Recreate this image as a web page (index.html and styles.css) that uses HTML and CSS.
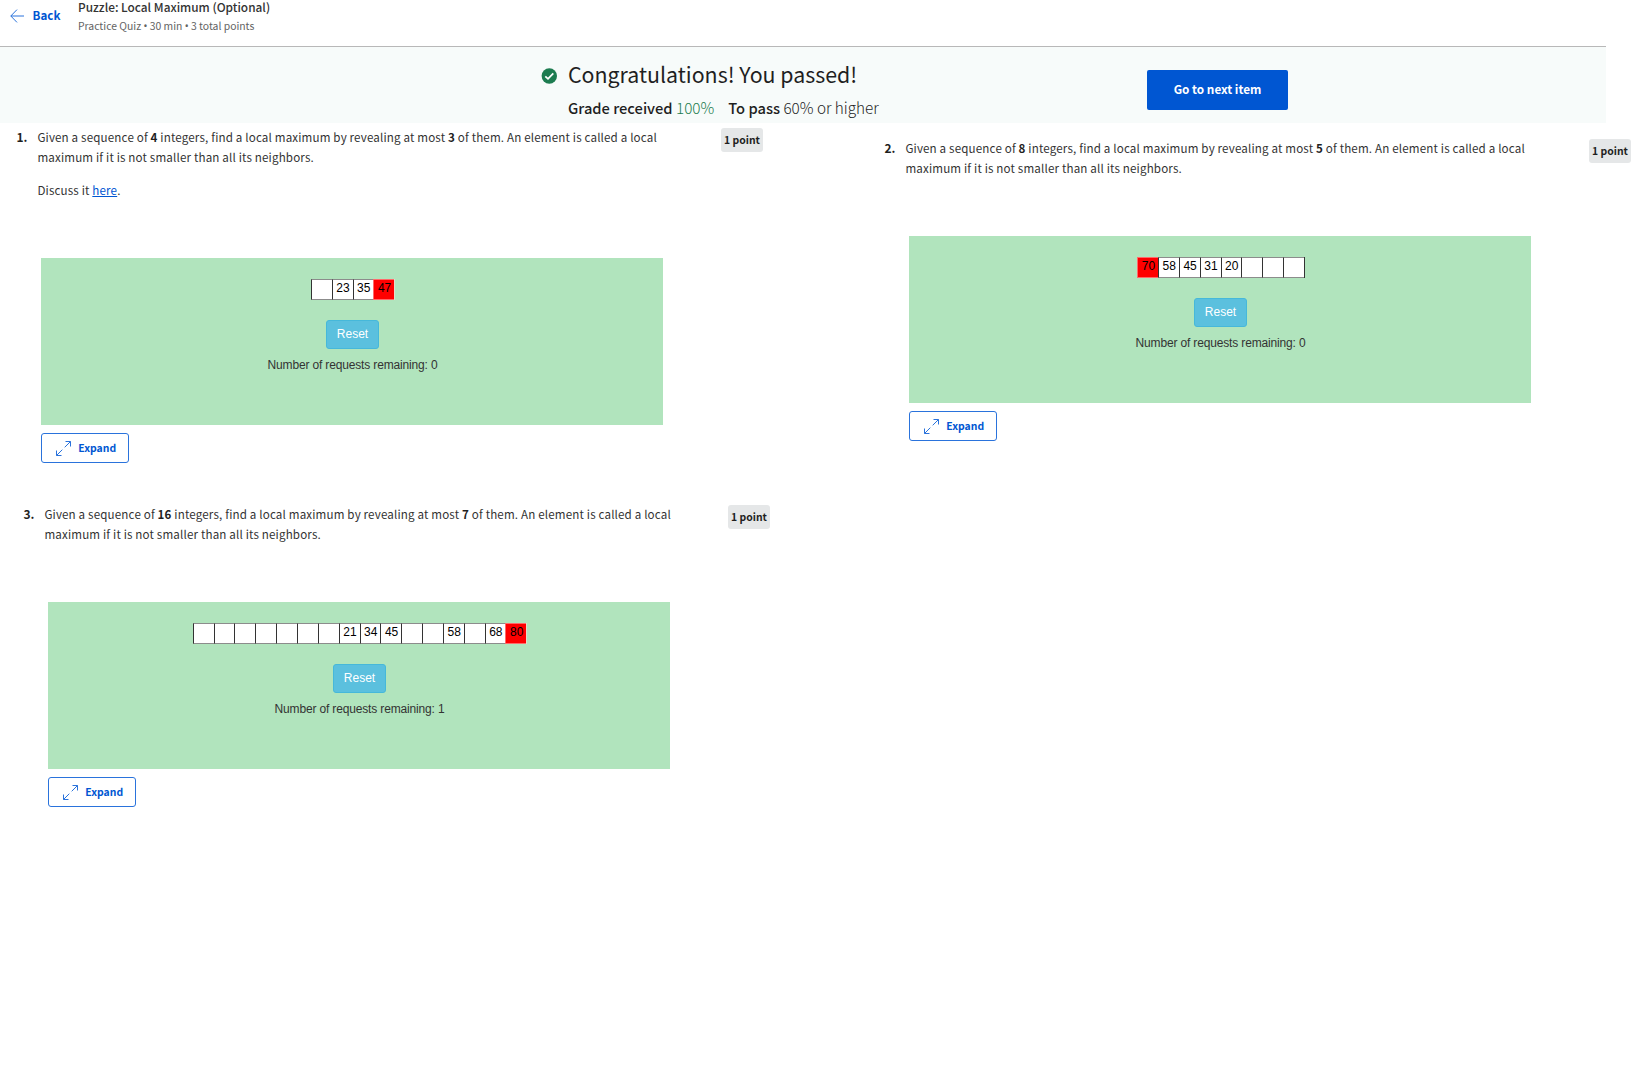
FILE: index.html
```html
<!DOCTYPE html>
<html lang="en">
<head>
<meta charset="utf-8">
<title>Puzzle: Local Maximum</title>
<link rel="stylesheet" href="styles.css">
</head>
<body>
<header class="topbar">
  <a class="back"><svg class="back-arrow" width="14" height="14" viewBox="0 0 14 14"><path d="M7 .6 .8 7 7 13.4M.8 7H14"/></svg><span>Back</span></a>
  <div class="heading">
    <h1 class="title">Puzzle: Local Maximum (Optional)</h1>
    <p class="subtitle">Practice Quiz <span class="dot">•</span> 30 min <span class="dot">•</span> 3 total points</p>
  </div>
</header>
<section class="result">
  <svg class="check" width="16" height="16" viewBox="0 0 16 16"><circle cx="8.3" cy="8" r="7.7"/><path d="M4.3 8.3 7 10.8 12.3 5.4"/></svg>
  <div class="result-text">
    <h2 class="congrats">Congratulations! You passed!</h2>
    <p class="grade"><b>Grade received</b> <span class="score">100%</span><b class="pass">To pass</b> 60% or higher</p>
  </div>
  <button class="next">Go to next item</button>
</section>
<main class="quiz">
  <article class="question q1">
    <span class="num">1.</span>
    <div class="body">
      <p class="prompt">Given a sequence of <b>4</b> integers, find a local maximum by revealing at most <b>3</b> of them. An element is called a local<br>maximum if it is not smaller than all its neighbors.</p>
      <p class="prompt discuss">Discuss it <a class="link">here</a>.</p>
      <div class="panel">
        <div class="cells"><i></i><i>23</i><i>35</i><i class="hit">47</i></div>
        <button class="reset">Reset</button>
        <p class="remaining">Number of requests remaining: 0</p>
      </div>
      <button class="expand"><svg width="15" height="15" viewBox="0 0 15 15"><path d="M9.5 .5H14.5V5.5M14.5 .5 8.7 6.3M6.3 8.7 .5 14.5M.5 9.5V14.5H5.5"/></svg><span>Expand</span></button>
    </div>
    <span class="badge">1 point</span>
  </article>
  <article class="question q2">
    <span class="num">2.</span>
    <div class="body">
      <p class="prompt">Given a sequence of <b>8</b> integers, find a local maximum by revealing at most <b>5</b> of them. An element is called a local<br>maximum if it is not smaller than all its neighbors.</p>
      <div class="panel">
        <div class="cells"><i class="hit">70</i><i>58</i><i>45</i><i>31</i><i>20</i><i></i><i></i><i></i></div>
        <button class="reset">Reset</button>
        <p class="remaining">Number of requests remaining: 0</p>
      </div>
      <button class="expand"><svg width="15" height="15" viewBox="0 0 15 15"><path d="M9.5 .5H14.5V5.5M14.5 .5 8.7 6.3M6.3 8.7 .5 14.5M.5 9.5V14.5H5.5"/></svg><span>Expand</span></button>
    </div>
    <span class="badge">1 point</span>
  </article>
  <article class="question q3">
    <span class="num">3.</span>
    <div class="body">
      <p class="prompt">Given a sequence of <b>16</b> integers, find a local maximum by revealing at most <b>7</b> of them. An element is called a local<br>maximum if it is not smaller than all its neighbors.</p>
      <div class="panel">
        <div class="cells"><i></i><i></i><i></i><i></i><i></i><i></i><i></i><i>21</i><i>34</i><i>45</i><i></i><i></i><i>58</i><i></i><i>68</i><i class="hit">80</i></div>
        <button class="reset">Reset</button>
        <p class="remaining">Number of requests remaining: 1</p>
      </div>
      <button class="expand"><svg width="15" height="15" viewBox="0 0 15 15"><path d="M9.5 .5H14.5V5.5M14.5 .5 8.7 6.3M6.3 8.7 .5 14.5M.5 9.5V14.5H5.5"/></svg><span>Expand</span></button>
    </div>
    <span class="badge">1 point</span>
  </article>
</main>
</body>
</html>
```
FILE: styles.css
```css
* { box-sizing: border-box; }
body { margin: 0; background: #fff; color: #1f1f1f; font-family: "Noto Sans CJK SC", "Noto Sans", sans-serif; }
h1, h2, p { margin: 0; }
button { font-family: inherit; }
.topbar { display: flex; width: 1606px; height: 47px; border-bottom: 1px solid #b8b8b8; }
.back { display: flex; width: 78px; padding-left: 10px; height: 32px; align-items: center; gap: 8.6px; color: #0056d2; font-size: 11.6px; font-weight: 700; }
.back span { padding-bottom: 2px; }
.back-arrow { fill: none; stroke: #2a73dc; stroke-width: 1; }
.title { font-size: 11.85px; line-height: 18px; font-weight: 500; margin-top: -2px; color: #333; }
.subtitle { margin-top: 1px; font-size: 10.4px; line-height: 18px; color: #636363; }
.dot { font-family: "Noto Sans", sans-serif; }
.result { display: flex; width: 1606px; height: 76px; background: #f7fbfa; }
.check { margin: 21px 0 0 541px; fill: #1d7c50; }
.check path { fill: none; stroke: #fff; stroke-width: 1.8; }
.result-text { width: 579px; margin-left: 11px; padding-top: 9px; }
.congrats { font-size: 21.35px; line-height: 36px; font-weight: 400; }
.grade { margin-top: 1px; font-size: 15.3px; line-height: 28px; font-weight: 300; white-space: nowrap; }
.grade b { font-size: 14.7px; font-weight: 500; }
.score { color: #1d7c50; }
.pass { margin-left: 14px; }
.next { width: 141px; height: 40px; margin-top: 23px; padding: 0 0 3px; border: 0; border-radius: 2px; background: #0056d2; color: #fff; font-size: 11.75px; font-weight: 700; }
.quiz { display: grid; grid-template-columns: 868px 770px; align-items: start; padding-top: 4px; }
.question { display: flex; width: 763px; font-size: 11.6px; }
.q2 { margin-top: 11px; }
.q3 { margin: 41px 0 0 7px; }
.num { width: 37px; padding-left: 16.5px; line-height: 20px; font-size: 12px; font-weight: 700; }
.body { width: 684px; }
.prompt { padding-left: 0.4px; line-height: 20px; white-space: nowrap; letter-spacing: 0.16px; color: #333; }
.prompt b { color: #1f1f1f; }
.discuss { margin-top: 13px; }
.link { color: #0056d2; text-decoration: underline; }
.panel { display: flex; flex-direction: column; align-items: center; width: 622px; height: 167px; margin: 58px 0 8px 4px; padding-top: 21px; background: #b1e4bd; font-family: "Liberation Sans", sans-serif; font-size: 12px; }
.cells { display: flex; height: 21px; margin-left: 2px; border-right: 1px solid #333; }
.cells:has(.hit:last-child) { border-right-color: #e6dcc9; }
.cells i { width: 20.85px; height: 21px; padding-left: 3.6px; border: solid #8c8c8c; border-width: 1px 0; border-left: 1px solid #333; background: #fff; color: #000; font-style: normal; line-height: 17px; }
.cells .hit { background: #f00; border-color: #ff6a6a; }
.reset { width: 53px; height: 29px; margin-top: 20px; padding: 0 0 2px 1px; border: 1px solid #46b8da; border-radius: 3px; background: #5bc0de; color: #fff; font-family: "Liberation Sans", sans-serif; font-size: 12px; }
.remaining { margin: 8px 0 0 1px; line-height: 17px; color: #333; letter-spacing: -0.155px; }
.expand { display: flex; align-items: center; width: 88px; height: 30px; margin-left: 4px; padding: 0 0 0 13.5px; gap: 7.8px; border: 1px solid #2a73dc; border-radius: 3px; background: #fff; color: #0056d2; font-size: 10.4px; font-weight: 700; }
.expand span { padding-bottom: 1px; }
.expand svg { fill: none; stroke: #2a73dc; stroke-width: 1; }
.badge { width: 42px; height: 24px; margin-top: 1px; border-radius: 3px; background: #e5e7e8; text-align: center; font-size: 10.4px; line-height: 24px; font-weight: 700; }
```
